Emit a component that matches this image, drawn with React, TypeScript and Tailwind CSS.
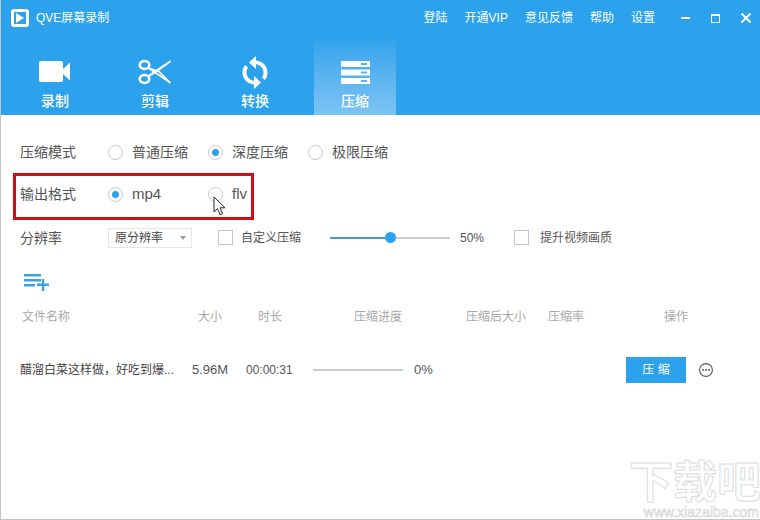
const cjk = 'font-["Liberation_Sans","Noto_Sans_CJK_SC",sans-serif]'

function Radio({ on }: { on?: boolean }) {
  return (
    <span className="flex h-[15px] w-[15px] shrink-0 items-center justify-center rounded-full border border-[#c8c8c8] bg-white">
      {on && <span className="h-[7px] w-[7px] rounded-full bg-[#2ca2ec]" />}
    </span>
  )
}

function Option({ label, on, big }: { label: string; on?: boolean; big?: boolean }) {
  return (
    <div className="flex w-[100px] shrink-0 items-center gap-[9px]">
      <Radio on={on} />
      <span className={big ? 'text-[15px] text-[#555]' : 'text-sm text-[#555]'}>{label}</span>
    </div>
  )
}

function Checkbox({ label, wide }: { label: string; wide?: boolean }) {
  return (
    <div className={`flex items-center ${wide ? 'gap-[11px]' : 'gap-2'}`}>
      <span className="h-[15px] w-[15px] border border-[#c8c8c8] bg-white" />
      <span className="text-xs text-[#555]">{label}</span>
    </div>
  )
}

function VideoIcon() {
  return (
    <svg width="32" height="22" viewBox="0 0 32 22" fill="#fff">
      <rect x="0" y="0" width="24" height="21" rx="2" />
      <path d="M24 8 31 1.5V19.5L24 13Z" />
    </svg>
  )
}

function ScissorsIcon() {
  return (
    <svg width="34" height="26" viewBox="0 0 34 26" fill="none" stroke="#fff">
      <ellipse cx="6.5" cy="6" rx="4.800" ry="4" strokeWidth="2.600" />
      <ellipse cx="6.5" cy="20" rx="4.800" ry="4" strokeWidth="2.600" />
      <path d="M10.500 9 32 23.500 21 12.500Z" strokeWidth="1.700" strokeLinejoin="round" />
      <path d="M10.500 17 32 2.500 17 13.500Z" strokeWidth="1.700" strokeLinejoin="round" />
    </svg>
  )
}

function SyncIcon() {
  return (
    <svg width="26" height="33" viewBox="0 0 26 33" fill="#fff">
      <path d="M14 0v4.500C20.500 5 25.500 10 25.500 16.500c0 3-1 5.500-2.600 7.600l-3-2.600c1-1.400 1.600-3.100 1.600-5 0-4.400-3.200-7.800-7.500-8.300V13L7 6.500Z" />
      <path d="M12 33v-4.500C5.500 28 .5 23 .5 16.500c0-3 1-5.500 2.600-7.600l3 2.600c-1 1.400-1.600 3.100-1.600 5 0 4.400 3.200 7.800 7.500 8.300V20l7 6.500Z" />
    </svg>
  )
}

function CompressIcon() {
  return (
    <svg width="29" height="23" viewBox="0 0 29 23" fill="#fff">
      <path fillRule="evenodd" d="M0 0h29v6H0ZM20 2v2h6V2Z" />
      <path fillRule="evenodd" d="M0 8.500h29v6H0ZM20 10.500v2h6v-2Z" />
      <path fillRule="evenodd" d="M0 17h29v6H0ZM20 19v2h6v-2Z" />
    </svg>
  )
}

const tabs = [
  { label: '录制', icon: <VideoIcon /> },
  { label: '剪辑', icon: <ScissorsIcon /> },
  { label: '转换', icon: <SyncIcon /> },
  { label: '压缩', icon: <CompressIcon />, active: true },
]

const links = ['登陆', '开通VIP', '意见反馈', '帮助', '设置']

const columns = [
  { label: '文件名称', w: 'w-[176px]' },
  { label: '大小', w: 'w-[60px]' },
  { label: '时长', w: 'w-[96px]' },
  { label: '压缩进度', w: 'w-[112px]' },
  { label: '压缩后大小', w: 'w-[82px]' },
  { label: '压缩率', w: 'w-[116px]' },
  { label: '操作', w: 'w-[40px]' },
]

export default function App() {
  return (
    <div className={`relative h-[520px] w-[760px] overflow-hidden border-b border-l border-[#c4c4c4] bg-white ${cjk}`}>
      {/* 顶部 */}
      <div className="h-[115px] bg-[#2ca2ec] text-white">
        <div className="flex h-9 items-center pl-[10px] pr-[9px]">
          <span className="flex h-[18px] w-[18px] items-center justify-center rounded-[3px] border-[3px] border-white">
            <svg width="8" height="10" viewBox="0 0 8 10" fill="#fff">
              <path d="M0 0 8 5 0 10Z" />
            </svg>
          </span>
          <span className="ml-[7px] text-xs">QVE屏幕录制</span>
          <div className="ml-auto flex items-center gap-[17px] text-xs">
            {links.map((l) => (
              <span key={l}>{l}</span>
            ))}
          </div>
          <div className="ml-[26px] flex items-center gap-[21px]">
            <span className="h-[2px] w-[9px] bg-white" />
            <span className="h-[9px] w-[9px] border border-t-2 border-white" />
            <svg width="10" height="10" viewBox="0 0 10 10" stroke="#fff" strokeWidth="2">
              <path d="M.5.5l9 9M9.500.5l-9 9" />
            </svg>
          </div>
        </div>
        <div className="flex h-[79px] gap-[18px] pl-[13px]">
          {tabs.map((t) => (
            <div
              key={t.label}
              className={`flex w-[82px] flex-col items-center ${t.active ? 'bg-gradient-to-b from-[#2ca2ec] to-[#7cc4f3]' : ''}`}
            >
              <div className="flex h-[55px] items-center pt-[17px]">{t.icon}</div>
              <span className="text-sm font-medium">{t.label}</span>
            </div>
          ))}
        </div>
      </div>

      {/* 压缩设置 */}
      <div className="flex h-[58px] items-center pl-[19px] pt-[16px]">
        <span className="w-[88px] shrink-0 text-sm text-[#555]">压缩模式</span>
        <Option label="普通压缩" />
        <Option label="深度压缩" on />
        <Option label="极限压缩" />
      </div>
      <div className="ml-[12px] flex h-[47px] w-[241px] items-center border-[3px] border-[#cc1016] pb-[4px] pl-[4px]">
        <span className="w-[88px] shrink-0 pb-[2px] text-sm text-[#555]">输出格式</span>
        <Option label="mp4" on big />
        <Option label="flv" big />
      </div>
      <div className="flex h-[34px] items-center pl-[19px] pt-[1px]">
        <span className="w-[88px] shrink-0 text-sm text-[#555]">分辨率</span>
        <div className="flex h-[20px] w-[84px] items-center justify-between border border-[#e5e5e5] pl-[6px] pr-[5px] text-xs text-[#444]">
          原分辨率
          <span className="h-0 w-0 border-x-[3px] border-t-[4px] border-x-transparent border-t-[#999]" />
        </div>
        <div className="ml-[26px] w-[112px]">
          <Checkbox label="自定义压缩" />
        </div>
        <div className="flex w-[120px] items-center">
          <span className="h-[2px] w-[55px] bg-[#4a9cc8]" />
          <span className="h-[11px] w-[11px] rounded-full bg-[#2ca2ec]" />
          <span className="h-[2px] w-[54px] bg-[#ccc]" />
        </div>
        <span className="ml-[10px] w-[54px] text-xs text-[#555]">50%</span>
        <Checkbox label="提升视频画质" wide />
      </div>

      {/* 添加文件 */}
      <div className="mt-[20px] pl-[23px]">
        <svg className="block" width="25" height="18" viewBox="0 0 25 18" fill="#3ea0dc">
          <rect x="0" y="0" width="17" height="2.500" />
          <rect x="0" y="5" width="17" height="2.500" />
          <rect x="0" y="10" width="11" height="2.500" />
          <rect x="13" y="9.500" width="12" height="2.500" />
          <rect x="17.800" y="5" width="2.500" height="12" />
        </svg>
      </div>

      {/* 文件列表 */}
      <div className="mt-[15px] flex h-5 items-center pl-[21px] text-xs text-[#a8a8a8]">
        {columns.map((c) => (
          <span key={c.label} className={`shrink-0 ${c.w}`}>{c.label}</span>
        ))}
      </div>
      <div className="mt-[24px] flex h-[38px] items-center pl-[19px] text-xs text-[#555]">
        <span className="w-[172px] truncate text-[#444]">醋溜白菜这样做，好吃到爆...</span>
        <span className="w-[54px] text-[13px]">5.96M</span>
        <span className="w-[67px]">00:00:31</span>
        <span className="h-[2px] w-[90px] bg-[#ccc]" />
        <span className="ml-[11px] w-[212px] text-[13px]">0%</span>
        <button className="h-[26px] w-[60px] bg-[#2ca2ec] text-xs text-white">压 缩</button>
        <svg className="ml-[13px]" width="14" height="14" viewBox="0 0 14 14" fill="#555">
          <circle cx="7" cy="7" r="6.400" fill="none" stroke="#555" strokeWidth="1.100" />
          <circle cx="4" cy="7" r="1" />
          <circle cx="7" cy="7" r="1" />
          <circle cx="10" cy="7" r="1" />
        </svg>
      </div>

      {/* 鼠标 */}
      <svg className="absolute left-[212px] top-[196px]" width="14" height="20" viewBox="0 0 14 20">
        <path d="M1 1v15l3.500-3.300 2.600 6 2.500-1.100-2.600-5.800H12Z" fill="#fff" stroke="#222" strokeWidth="1" strokeLinejoin="round" />
      </svg>

      {/* 水印 */}
      <div className="absolute left-[624px] top-[462px] flex w-[136px] flex-col items-end font-bold text-white [-webkit-text-stroke:1px_#dcdcdc]">
        <span className="text-[44px] leading-[42px]">下载吧</span>
        <span className="pr-[2px] text-[14px] leading-[16px] font-normal [-webkit-text-stroke:0.6px_#cfcfcf]">www.xiazaiba.com</span>
      </div>
    </div>
  )
}
